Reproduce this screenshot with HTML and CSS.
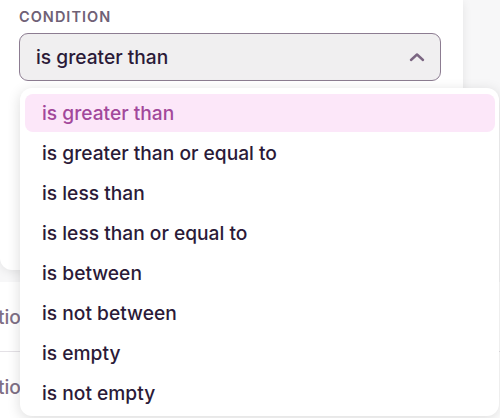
FILE: index.html
```html
<!DOCTYPE html>
<html>
<head>
<meta charset="utf-8">
<link rel="stylesheet" href="styles.css">
</head>
<body>
<div class="page">
  <div class="card">
    <div class="label">CONDITION</div>
    <div class="select">
      <span class="select-value">is greater than</span>
      <svg class="chevron" width="16" height="10" viewBox="0 0 16 10"><path d="M2 8 L8 2.5 L14 8" fill="none" stroke="#7b6682" stroke-width="2.4" stroke-linecap="round" stroke-linejoin="round"/></svg>
    </div>
  </div>
  <div class="rows">
    <div class="row"><span class="row-text">Condition</span></div>
    <div class="row"><span class="row-text">Condition</span></div>
  </div>
  <div class="dropdown">
    <div class="item active">is greater than</div>
    <div class="item">is greater than or equal to</div>
    <div class="item">is less than</div>
    <div class="item">is less than or equal to</div>
    <div class="item">is between</div>
    <div class="item">is not between</div>
    <div class="item">is empty</div>
    <div class="item">is not empty</div>
  </div>
</div>
</body>
</html>
```
FILE: styles.css
```css
html, body {
  margin: 0;
  padding: 0;
}
body {
  width: 500px;
  height: 418px;
  overflow: hidden;
  background: #f7f7f8;
  font-family: Inter, "Noto Sans", sans-serif;
}
.page {
  position: relative;
  width: 500px;
  height: 418px;
  overflow: hidden;
}
.card {
  width: 463px;
  height: 270px;
  box-sizing: border-box;
  background: #ffffff;
  border-radius: 0 0 12px 12px;
  box-shadow: 0 2px 10px rgba(0, 0, 0, 0.08);
  padding: 9px 22px 0 19px;
}
.label {
  font-size: 14.5px;
  font-weight: 600;
  letter-spacing: 0.07em;
  color: #6f6176;
  line-height: 16px;
}
.select {
  margin-top: 8px;
  height: 48px;
  box-sizing: border-box;
  border: 1.5px solid #8c7c91;
  border-radius: 9px;
  background: #f0eff0;
  display: flex;
  align-items: center;
  justify-content: space-between;
  padding: 0 15px 0 16px;
}
.select-value {
  font-size: 19.2px;
  font-weight: 500;
  color: #2b1a38;
}
.chevron {
  display: block;
}
.rows {
  margin-top: 12px;
  background: #ffffff;
}
.row {
  height: 70px;
  box-sizing: border-box;
  border-bottom: 1px solid #e4e1e6;
  display: flex;
  align-items: center;
}
.row-text {
  margin-left: -56px;
  font-size: 19.2px;
  font-weight: 500;
  color: #7f7086;
}
.dropdown {
  position: absolute;
  left: 20px;
  top: 88px;
  width: 479px;
  height: 328px;
  box-sizing: border-box;
  background: #ffffff;
  border-radius: 12px;
  box-shadow: 0 3px 14px rgba(0, 0, 0, 0.14);
  padding: 6px 4px 0 5px;
  display: flex;
  flex-direction: column;
  gap: 2px;
}
.item {
  height: 38px;
  flex: none;
  display: flex;
  align-items: center;
  padding-left: 17px;
  border-radius: 8px;
  font-size: 19.2px;
  font-weight: 500;
  color: #2b1a38;
}
.item.active {
  background: #fce7f9;
  color: #a2489b;
}
```
